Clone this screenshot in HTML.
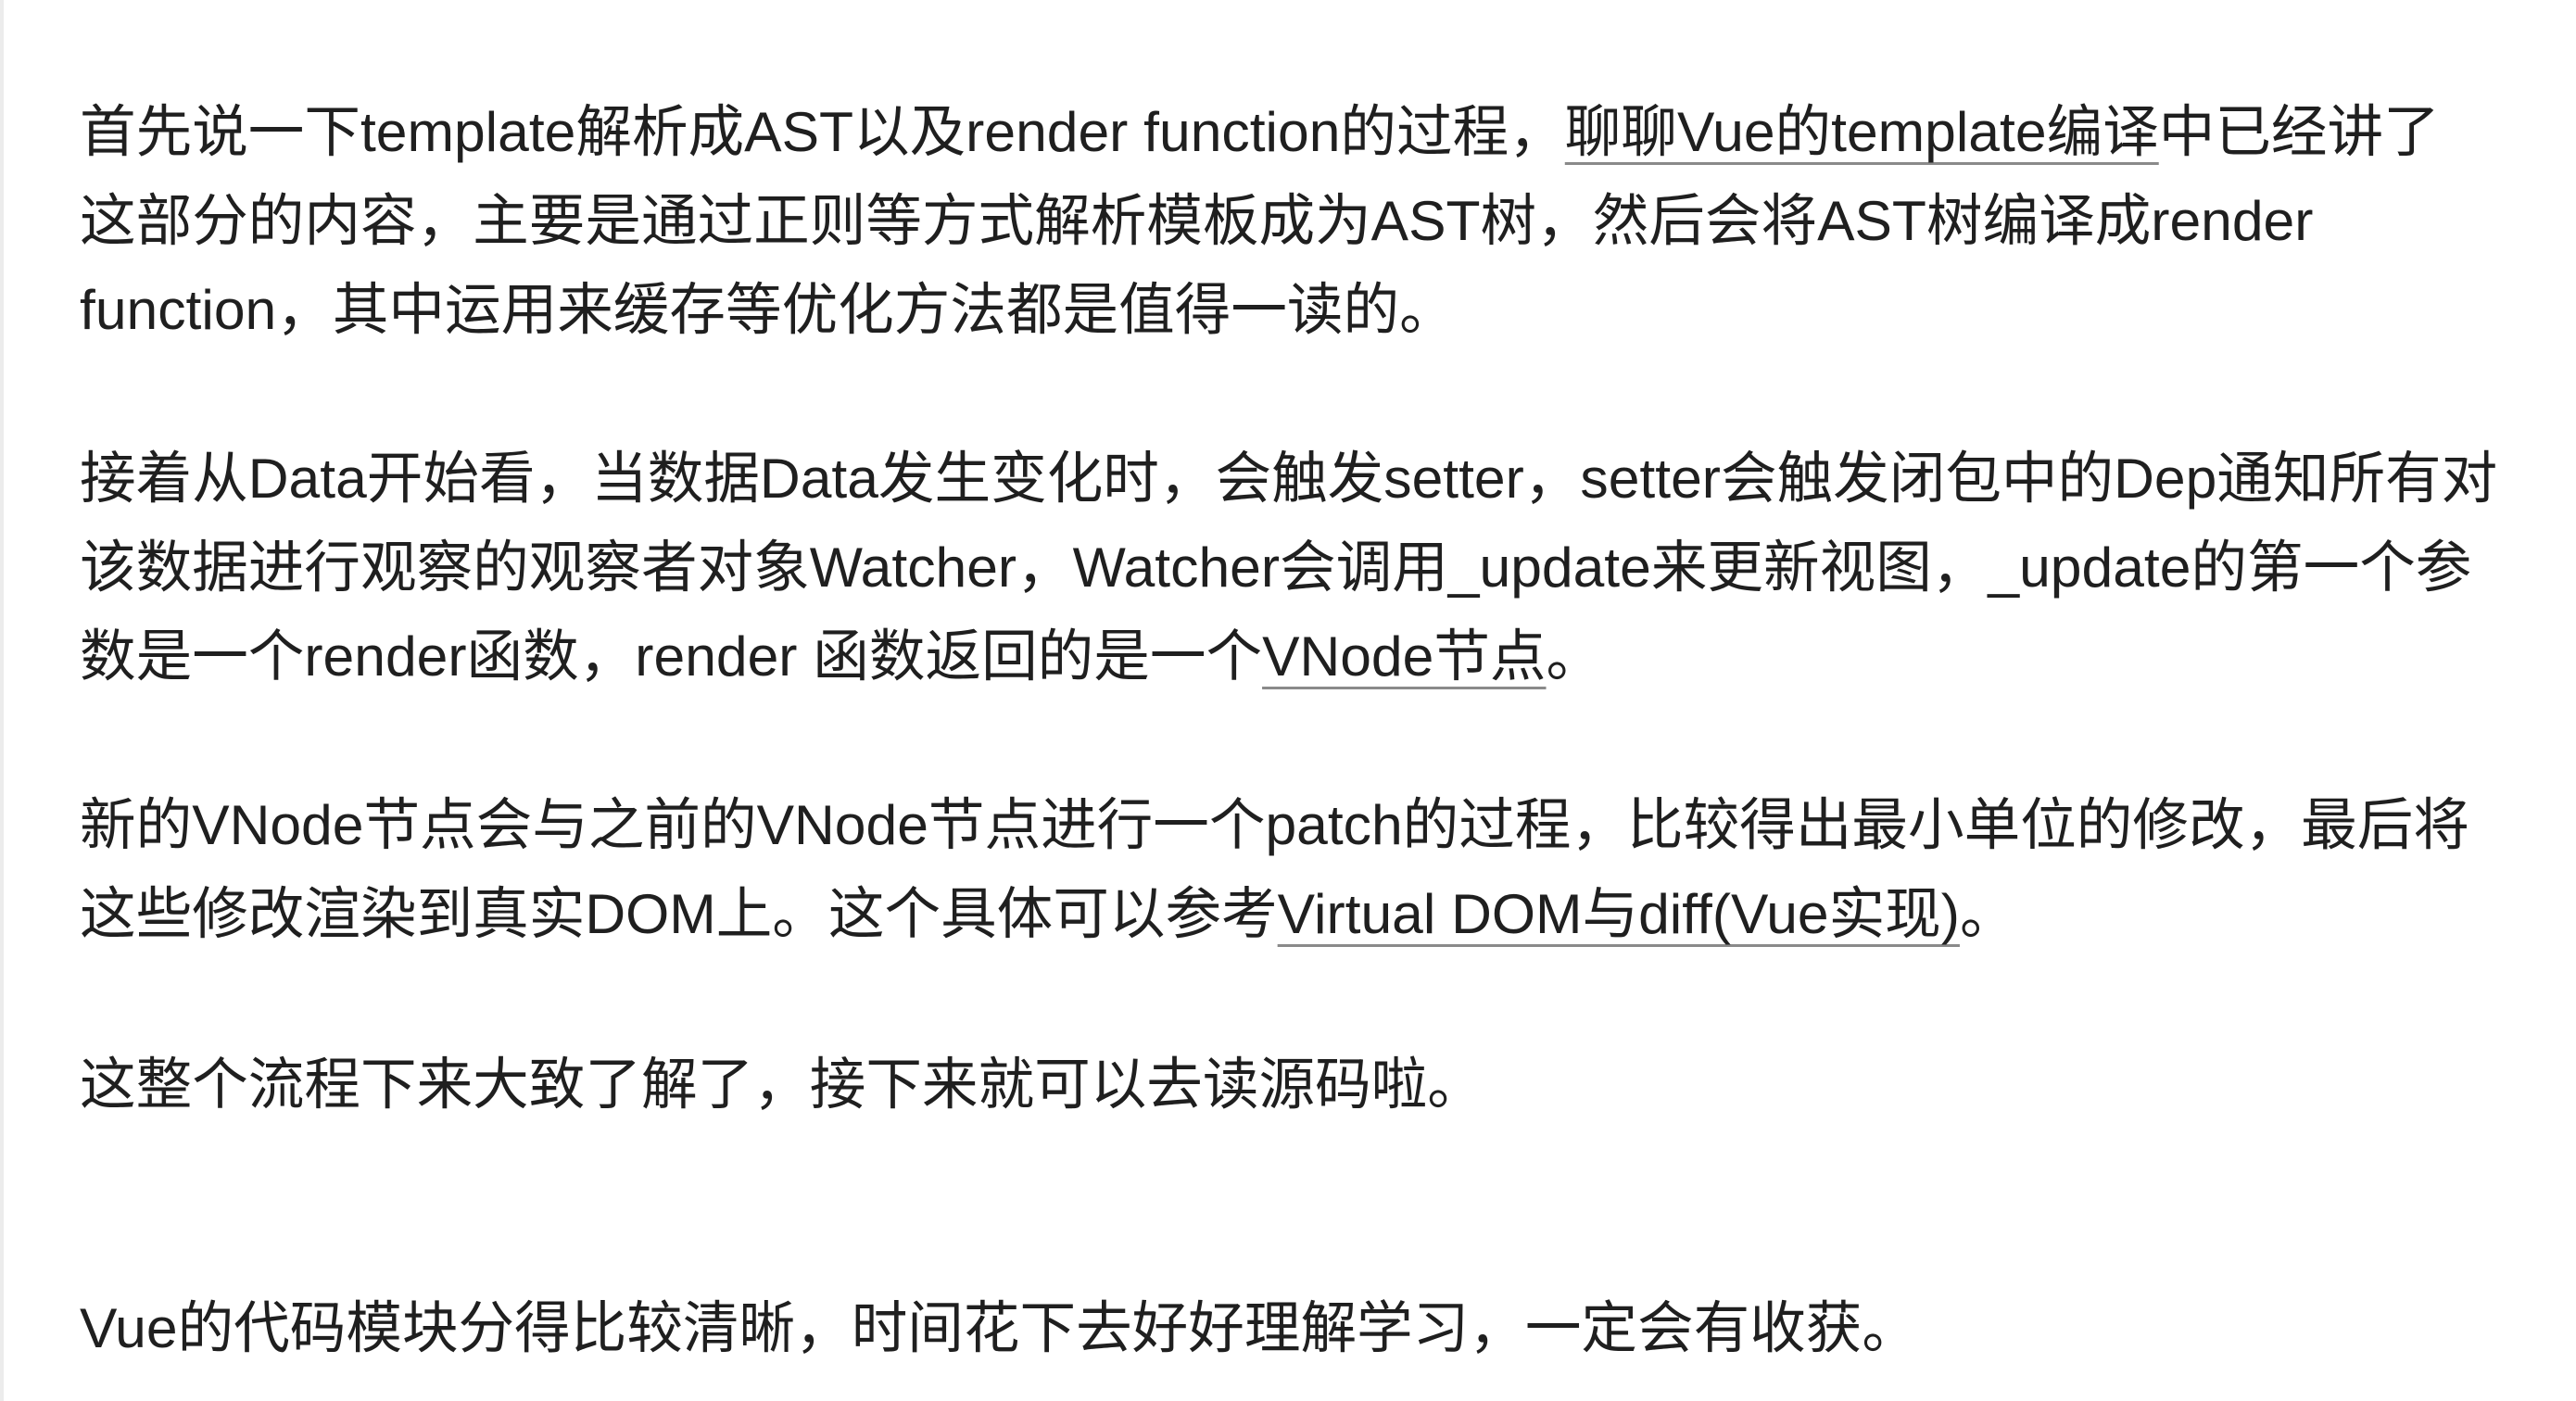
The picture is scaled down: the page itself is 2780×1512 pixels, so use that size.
<!DOCTYPE html>
<html><head><meta charset="utf-8"><style>
html,body{margin:0;padding:0;background:#fff;}
body{width:2780px;height:1512px;position:relative;overflow:hidden;
font-family:"Liberation Sans","Noto Sans CJK SC",sans-serif;font-size:60.6px;color:#1f1f1f;}
.strip{position:absolute;left:0;top:0;width:4px;height:1512px;background:#ececec;}
.l{position:absolute;left:86px;height:96px;line-height:96px;white-space:nowrap;}
a{color:inherit;text-decoration:underline;text-decoration-color:#8a8a8a;text-decoration-thickness:3px;text-underline-offset:12px;text-decoration-skip-ink:none;}
</style></head><body>
<div class="strip"></div>
<div class="l" style="top:94px">首先说一下template解析成AST以及render function的过程，<a>聊聊Vue的template编译</a>中已经讲了</div>
<div class="l" style="top:190px">这部分的内容，主要是通过正则等方式解析模板成为AST树，然后会将AST树编译成render</div>
<div class="l" style="top:286px">function，其中运用来缓存等优化方法都是值得一读的。</div>
<div class="l" style="top:468px">接着从Data开始看，当数据Data发生变化时，会触发setter，setter会触发闭包中的Dep通知所有对</div>
<div class="l" style="top:564px">该数据进行观察的观察者对象Watcher，Watcher会调用_update来更新视图，_update的第一个参</div>
<div class="l" style="top:660px">数是一个render函数，render 函数返回的是一个<a>VNode节点</a>。</div>
<div class="l" style="top:842px">新的VNode节点会与之前的VNode节点进行一个patch的过程，比较得出最小单位的修改，最后将</div>
<div class="l" style="top:938px">这些修改渲染到真实DOM上。这个具体可以参考<a>Virtual DOM与diff(Vue实现)</a>。</div>
<div class="l" style="top:1122px">这整个流程下来大致了解了，接下来就可以去读源码啦。</div>
<div class="l" style="top:1385px">Vue的代码模块分得比较清晰，时间花下去好好理解学习，一定会有收获。</div>
</body></html>
